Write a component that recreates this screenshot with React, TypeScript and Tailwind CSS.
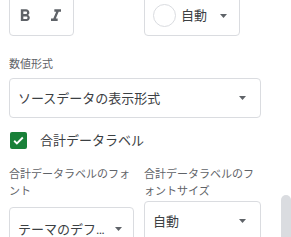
import React from 'react';

const Caret = ({ className = '' }: { className?: string }) => (
    <svg width="7" height="4" viewBox="0 0 7 4" className={className}>
        <path d="M0 0h7L3.5 4z" fill="#5f6368" />
    </svg>
);

const App: React.FC = () => {
    return (
        <div className="relative w-[291px] h-[237px] overflow-hidden bg-white font-['Roboto','Noto_Sans_CJK_JP',sans-serif] text-[#3c4043]">
            {/* Bold / italic and text colour */}
            <div className="flex items-start -mt-[5px] pl-[9px]">
                <div className="flex items-center w-[65px] h-[41px] border border-[#dadce0] rounded-[4px] pl-[5px]">
                    <svg width="20" height="20" viewBox="0 0 24 24" fill="#5f6368">
                        <path d="M15.6 10.79c.97-.67 1.65-1.77 1.65-2.79 0-2.26-1.75-4-4-4H7v14h7.04c2.09 0 3.71-1.7 3.71-3.79 0-1.52-.86-2.82-2.15-3.42zM10 6.5h3c.83 0 1.5.67 1.5 1.5s-.67 1.5-1.5 1.5h-3v-3zm3.5 9H10v-3h3.5c.83 0 1.5.67 1.5 1.5s-.67 1.5-1.5 1.5z" />
                    </svg>
                    <svg width="20" height="20" viewBox="0 0 24 24" fill="#5f6368" className="ml-[11px]">
                        <path d="M10 4v3h2.21l-3.42 8H6v3h8v-3h-2.21l3.42-8H18V4z" />
                    </svg>
                </div>
                <div className="flex items-center ml-[70px] w-[96px] h-[41px] border border-[#dadce0] rounded-[4px] pl-[8px]">
                    <div className="w-[23px] h-[23px] rounded-full border border-[#dadce0] bg-white" />
                    <span className="ml-[5px] text-[13px] leading-none">自動</span>
                    <Caret className="ml-[13px]" />
                </div>
            </div>

            {/* Number format */}
            <div className="px-[9px] mt-[21px]">
                <div className="text-[11px] leading-[16px] text-[#5f6368]">数値形式</div>
                <div className="mt-[5px] flex items-center justify-between w-[252px] h-[40px] border border-[#dadce0] rounded-[4px] pl-[8px] pr-[14px]">
                    <span className="text-[13px] leading-none">ソースデータの表示形式</span>
                    <Caret />
                </div>
            </div>

            {/* Total data label checkbox */}
            <div className="flex items-center mt-[14px] pl-[10px]">
                <div className="flex items-center justify-center w-[17px] h-[17px] rounded-[2px] bg-[#188038]">
                    <svg width="13" height="13" viewBox="0 0 24 24">
                        <path d="M4 12.5l5 5L20 6.5" stroke="white" strokeWidth="3.4" fill="none" />
                    </svg>
                </div>
                <span className="ml-[13px] text-[13px] leading-none">合計データラベル</span>
            </div>

            {/* Font + font size */}
            <div className="flex items-start mt-[17px] pl-[9px]">
                <div className="w-[125px]">
                    <div className="text-[11px] leading-[17px] text-[#5f6368]">合計データラベルのフォント</div>
                    <div className="mt-[7px] flex items-center justify-between h-[40px] border border-[#dadce0] rounded-[4px] pl-[8px] pr-[11px] pt-[4px]">
                        <span className="w-[94px] truncate text-[13px] leading-none">テーマのデフォルト</span>
                        <Caret />
                    </div>
                </div>
                <div className="w-[117px] ml-[10px]">
                    <div className="text-[11px] leading-[17px] text-[#5f6368]">合計データラベルのフォントサイズ</div>
                    <div className="mt-[1px] flex items-center justify-between h-[40px] border border-[#dadce0] rounded-[4px] pl-[8px] pr-[14px]">
                        <span className="text-[13px] leading-none">自動</span>
                        <Caret />
                    </div>
                </div>
            </div>

            {/* scrollbar thumb */}
            <div className="absolute left-[281px] top-[195px] w-[10px] h-[60px] rounded-t-full bg-[#dadce0]" />
        </div>
    );
};

export default App;
